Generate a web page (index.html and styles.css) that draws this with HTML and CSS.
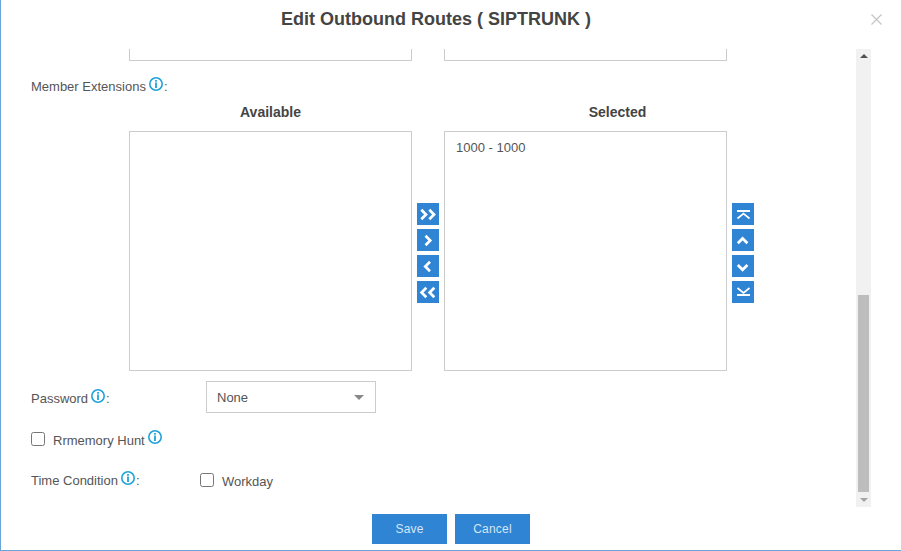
FILE: index.html
```html
<!DOCTYPE html>
<html lang="en">
<head>
<meta charset="utf-8">
<title>Edit Outbound Routes</title>
<link rel="stylesheet" href="styles.css">
</head>
<body>
<svg class="defs" width="0" height="0" aria-hidden="true">
  <symbol id="info" viewBox="0 0 15 15">
    <circle cx="7" cy="7" r="6.200" fill="none" stroke="#1fa3da" stroke-width="1.600"/>
    <rect x="6.100" y="3" width="1.800" height="1.700" fill="#1fa3da"/>
    <rect x="6.100" y="5.500" width="1.800" height="5.500" fill="#1fa3da"/>
  </symbol>
</svg>
<div class="modal">
  <header class="head">
    <h1 class="title">Edit Outbound Routes ( SIPTRUNK )</h1>
    <svg class="close" width="11" height="11" viewBox="0 0 11 11"><path d="M.5.5l10 10M10.500.5l-10 10" stroke="#c4c4c4" stroke-width="1.200" fill="none"/></svg>
  </header>
  <div class="body">
    <div class="scroll">
      <div class="stub-row">
        <div class="stub"></div>
        <div class="stub"></div>
      </div>
      <div class="label-row member">
        <span>Member Extensions</span>
        <svg class="info" width="15" height="15"><use href="#info"/></svg><span>:</span>
      </div>
      <div class="transfer">
        <div class="col">
          <div class="col-title">Available</div>
          <div class="listbox"></div>
        </div>
        <div class="btns">
          <button class="ico"><svg width="22" height="22" viewBox="0 0 22 22"><path d="M4.300 6.800l4.700 4.700-4.700 4.700M12.300 6.800l4.700 4.700-4.700 4.700"/></svg></button>
          <button class="ico"><svg width="22" height="22" viewBox="0 0 22 22"><path d="M8.500 6.800l4.700 4.700-4.700 4.700"/></svg></button>
          <button class="ico"><svg width="22" height="22" viewBox="0 0 22 22"><path d="M13 6.800l-4.700 4.700 4.700 4.700"/></svg></button>
          <button class="ico"><svg width="22" height="22" viewBox="0 0 22 22"><path d="M9.300 6.800l-4.700 4.700 4.700 4.700M17.300 6.800l-4.700 4.700 4.700 4.700"/></svg></button>
        </div>
        <div class="col">
          <div class="col-title selected">Selected</div>
          <div class="listbox"><div class="item">1000 - 1000</div></div>
        </div>
        <div class="btns order">
          <button class="ico"><svg width="22" height="22" viewBox="0 0 22 22"><path class="bar" d="M5 8h13"/><path class="thin" d="M5.500 15.500l6-5 6 5"/></svg></button>
          <button class="ico"><svg width="22" height="22" viewBox="0 0 22 22"><path d="M5.800 14.300l4.800-4.800 4.800 4.800"/></svg></button>
          <button class="ico"><svg width="22" height="22" viewBox="0 0 22 22"><path d="M5.800 10l4.800 4.800 4.800-4.800"/></svg></button>
          <button class="ico"><svg width="22" height="22" viewBox="0 0 22 22"><path class="bar" d="M5 14h13"/><path class="thin" d="M5.500 7l6 5 6-5"/></svg></button>
        </div>
      </div>
      <div class="password-row">
        <div class="password-label">
          <span>Password</span>
          <svg class="info" width="15" height="15"><use href="#info"/></svg><span>:</span>
        </div>
        <div class="select"><span>None</span><i class="caret"></i></div>
      </div>
      <div class="hunt-row">
        <i class="check"></i>
        <span class="hunt-text">Rrmemory Hunt</span>
        <svg class="info" width="15" height="15"><use href="#info"/></svg>
      </div>
      <div class="time-row">
        <div class="time-label">
          <span>Time Condition</span>
          <svg class="info" width="15" height="15"><use href="#info"/></svg><span>:</span>
        </div>
        <i class="check"></i>
        <span class="workday">Workday</span>
      </div>
    </div>
    <div class="scrollbar">
      <i class="arrow up"></i>
      <div class="track"><div class="thumb"></div></div>
      <i class="arrow down"></i>
    </div>
  </div>
  <footer class="foot">
    <button class="btn">Save</button>
    <button class="btn">Cancel</button>
  </footer>
</div>
</body>
</html>
```
FILE: styles.css
```css
* { box-sizing: border-box; }
html, body { margin: 0; padding: 0; height: 551px; overflow: hidden; background: #fff; }
body { font-family: "Liberation Sans", Arial, sans-serif; font-size: 13px; color: #555; }
.defs { position: absolute; }
.modal { height: 551px; border-left: 1px solid #6aa5d8; border-bottom: 1px solid #6aa5d8; display: flex; flex-direction: column; }
.head { height: 49px; position: relative; display: flex; justify-content: center; padding: 9px 30px 0 0; flex: none; }
.title { margin: 0; font-size: 18px; line-height: 21px; font-weight: 700; color: #444; }
.close { position: absolute; right: 19px; top: 14px; }
.body { height: 458px; flex: none; display: flex; padding-right: 30px; }
.scroll { flex: 1; overflow: hidden; padding-left: 30px; }
.stub-row { display: flex; gap: 32px; padding-left: 98px; }
.stub { width: 283px; height: 12px; border: 1px solid #ccc; border-top: 0; }
.label-row, .password-label, .time-label { display: flex; align-items: center; }
.member { margin-top: 16px; height: 18px; }
.info { flex: none; margin: -3px 0 0 3px; display: block; }
.transfer { display: flex; padding-left: 98px; margin-top: 8px; }
.col { width: 283px; flex: none; }
.col-title { height: 19px; text-align: center; font-weight: 700; font-size: 14px; line-height: 18px; color: #444; margin-bottom: 9px; }
.col-title.selected { margin-right: -64px; }
.listbox { height: 240px; border: 1px solid #ccc; padding: 8px 11px; }
.item { line-height: 15px; color: #555; }
.btns { width: 32px; flex: none; display: flex; flex-direction: column; gap: 4px; padding: 100px 5px 0; }
.ico { width: 22px; height: 22px; border: 0; padding: 0; background: #2f84d3; display: block; }
.ico svg { display: block; }
.ico path { fill: none; stroke: #fff; stroke-width: 2.700; }
.ico path.bar { stroke-width: 2; }
.ico path.thin { stroke-width: 1.700; }
.password-row { display: flex; align-items: center; height: 32px; margin-top: 10px; }
.password-label { width: 175px; padding-top: 2px; }
.select { width: 170px; height: 32px; border: 1px solid #ccc; display: flex; align-items: center; justify-content: space-between; padding: 0 11px 0 10px; }
.caret { width: 0; height: 0; border-left: 5px solid transparent; border-right: 5px solid transparent; border-top: 5px solid #888; }
.hunt-row { display: flex; align-items: center; margin-top: 17px; height: 18px; }
.check { flex: none; width: 14px; height: 14px; border: 1px solid #767676; border-radius: 2.500px; background: #fff; display: block; }
.hunt-text { margin-left: 8px; padding-top: 2px; }
.time-row { display: flex; align-items: center; margin-top: 23px; height: 18px; }
.time-label { width: 169px; }
.workday { margin-left: 8px; padding-top: 2px; }
.scrollbar { width: 15px; flex: none; background: #f1f1f1; display: flex; flex-direction: column; align-items: center; }
.arrow { flex: none; width: 0; height: 0; margin: 5px 0; border-left: 4px solid transparent; border-right: 4px solid transparent; }
.arrow.up { border-bottom: 4px solid #505050; }
.arrow.down { border-top: 4px solid #a3a3a3; }
.track { flex: 1; width: 100%; padding-top: 232px; display: flex; justify-content: center; }
.thumb { width: 11px; background: #bdbdbd; height: 197px; }
.foot { flex: 1; display: flex; justify-content: center; gap: 8px; padding-top: 7px; }
.btn { width: 75px; height: 30px; border: 0; background: #2f84d3; color: #d5e6f6; font: 12px "Liberation Sans", Arial, sans-serif; letter-spacing: .2px; }
```
